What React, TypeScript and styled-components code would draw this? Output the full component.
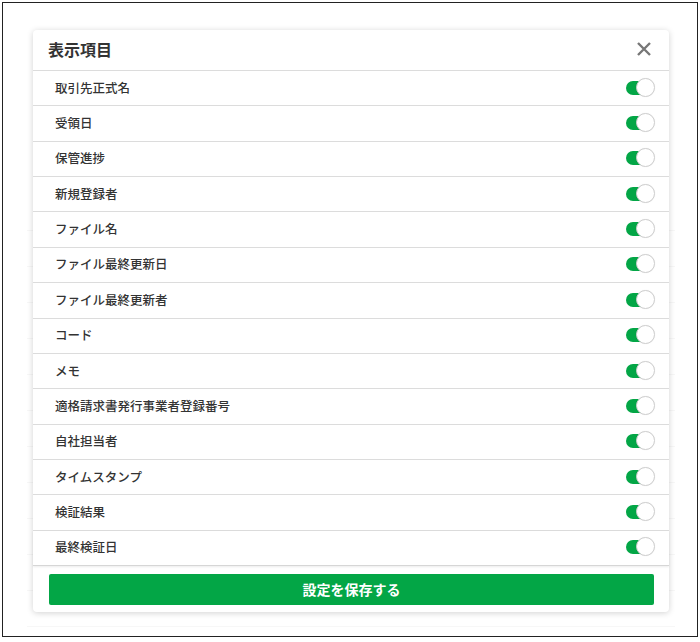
import styled, { createGlobalStyle } from 'styled-components';

const GREEN = '#03a646';

const GlobalStyle = createGlobalStyle`
  html, body {
    margin: 0;
    padding: 0;
    background: #fff;
  }
  body {
    font-family: "Noto Sans CJK JP", "Noto Sans", sans-serif;
    color: #333;
  }
`;

const Frame = styled.div`
  position: relative;
  box-sizing: border-box;
  margin: 2px 0 0 2px;
  width: 696px;
  height: 635px;
  border: 1px solid #222;
  overflow: hidden;
  background: #fff;
`;

// faint page behind the dialog, only its row lines show through
const Page = styled.div`
  padding: 192px 22px 0 24px;
`;

const PageRow = styled.div`
  height: 35px;
  border-bottom: 1px solid #f2f2f2;
`;

const Overlay = styled.div`
  position: absolute;
  inset: 0;
  background: rgba(255, 255, 255, 0.4);
`;

const Modal = styled.div`
  position: absolute;
  left: 30px;
  top: 27px;
  width: 636px;
  background: #fff;
  border-radius: 4px;
  box-shadow: 0 1px 6px rgba(0, 0, 0, 0.18);
  display: flex;
  flex-direction: column;
`;

const Header = styled.div`
  display: flex;
  align-items: center;
  justify-content: space-between;
  box-sizing: border-box;
  height: 41px;
  padding: 0 14px 0 15px;
  border-bottom: 1px solid #dcdcdc;
`;

const Title = styled.h2`
  margin: 0;
  font-size: 16px;
  font-weight: 700;
  color: #333;
  line-height: 1;
  padding-bottom: 3px;
`;

const CloseButton = styled.button`
  display: flex;
  align-items: center;
  justify-content: center;
  width: 22px;
  height: 22px;
  padding: 0;
  margin-bottom: 2px;
  border: none;
  background: none;
  cursor: pointer;
`;

const List = styled.ul`
  list-style: none;
  margin: 0;
  padding: 0;
`;

const Row = styled.li`
  display: flex;
  align-items: center;
  justify-content: space-between;
  box-sizing: border-box;
  height: 35.36px;
  padding: 0 14px 2px 22px;
  border-bottom: 1px solid #dcdcdc;
  font-size: 12.5px;
  font-weight: 500;
  color: #333;

  &:last-child {
    border-bottom: 1px solid #d6d6d6;
    box-shadow: 0 1px 2px rgba(0, 0, 0, 0.08);
  }
`;

const Toggle = styled.span`
  position: relative;
  display: inline-block;
  width: 29px;
  height: 19px;
`;

const Track = styled.span`
  position: absolute;
  left: 0;
  top: 3px;
  width: 26px;
  height: 14px;
  border-radius: 7px;
  background: ${GREEN};
`;

const Knob = styled.span`
  position: absolute;
  right: 0;
  top: 0;
  box-sizing: border-box;
  width: 19px;
  height: 19px;
  border-radius: 50%;
  background: #fff;
  border: 1px solid #cfcfcf;
  box-shadow: 0 0 1px rgba(0, 0, 0, 0.1);
`;

const Footer = styled.div`
  padding: 8px 15px 7px 16px;
`;

const SaveButton = styled.button`
  display: block;
  width: 100%;
  height: 31px;
  padding: 0 0 2px;
  border: none;
  border-radius: 2px;
  background: ${GREEN};
  color: #fff;
  font-family: "Noto Sans CJK JP", "Noto Sans", sans-serif;
  font-size: 14px;
  font-weight: 700;
  cursor: pointer;
`;

const ITEMS = [
  '取引先正式名',
  '受領日',
  '保管進捗',
  '新規登録者',
  'ファイル名',
  'ファイル最終更新日',
  'ファイル最終更新者',
  'コード',
  'メモ',
  '適格請求書発行事業者登録番号',
  '自社担当者',
  'タイムスタンプ',
  '検証結果',
  '最終検証日',
];

const BG_ROWS = Array.from({ length: 12 }, (_, i) => i);

export default function App() {
  return (
    <>
      <GlobalStyle />
      <Frame>
        <Page>
          {BG_ROWS.map((i) => (
            <PageRow key={i} />
          ))}
        </Page>
        <Overlay />
        <Modal>
          <Header>
            <Title>表示項目</Title>
            <CloseButton type="button" aria-label="close">
              <svg width="16" height="16" viewBox="0 0 16 16">
                <path d="M2 2 L14 14 M14 2 L2 14" stroke="#777" strokeWidth="2.4" />
              </svg>
            </CloseButton>
          </Header>
          <List>
            {ITEMS.map((label) => (
              <Row key={label}>
                <span>{label}</span>
                <Toggle>
                  <Track />
                  <Knob />
                </Toggle>
              </Row>
            ))}
          </List>
          <Footer>
            <SaveButton type="button">設定を保存する</SaveButton>
          </Footer>
        </Modal>
      </Frame>
    </>
  );
}
